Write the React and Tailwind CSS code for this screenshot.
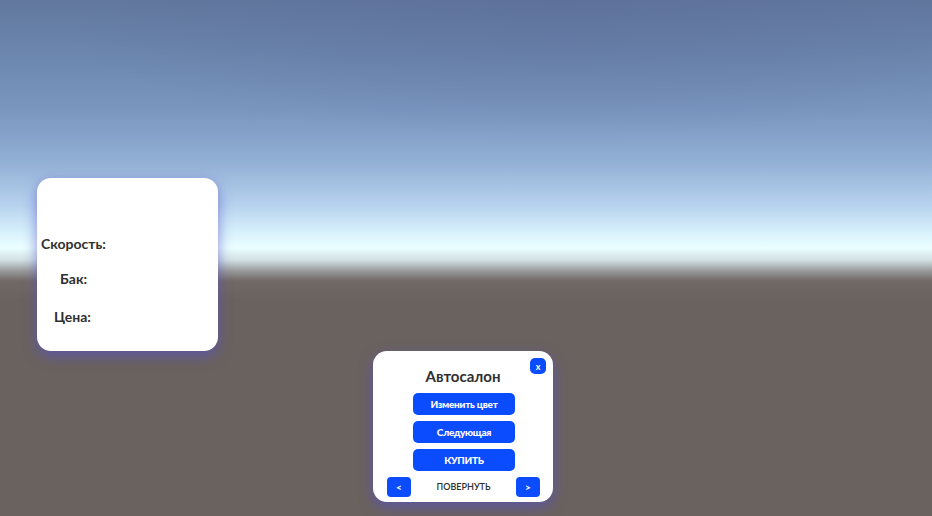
import React from 'react';

const font = { fontFamily: 'Lato, "Noto Sans", sans-serif' };

// ── Car stats card ─────────────────────────────────────────────────────────
const StatsPanel = () => (
    <div className="ml-[37px] mt-[178px] w-[181px] h-[173px] shrink-0 bg-white rounded-[14px] shadow-[0_5px_14px_rgba(88,80,200,0.65)] relative text-[#2f2f2f] font-bold text-[14px]">
        <div className="flex flex-col">
            <span className="mt-[57px] ml-[4px] leading-[18px]">Скорость:</span>
            <span className="mt-[17px] ml-[23px] leading-[18px]">Бак:</span>
            <span className="mt-[20px] ml-[17px] leading-[18px]">Цена:</span>
        </div>
    </div>
);

const BlueButton = ({ children }) => (
    <button className="w-[102px] h-[22px] rounded-[5px] bg-[#0b4cff] text-white text-[10px] font-black tracking-tight flex items-center justify-center">
        {children}
    </button>
);

const ArrowButton = ({ children }) => (
    <button className="w-[24px] h-[20px] rounded-[4px] bg-[#0b4cff] text-white text-[10px] font-black flex items-center justify-center">
        {children}
    </button>
);

// ── Showroom menu ──────────────────────────────────────────────────────────
const ShowroomPanel = () => (
    <div className="ml-[155px] mt-[351px] w-[180px] h-[151px] shrink-0 bg-white rounded-[14px] shadow-[0_5px_14px_rgba(88,80,200,0.65)] relative">
        <button className="absolute right-[7px] top-[7px] w-[16px] h-[16px] rounded-[5px] bg-[#0b4cff] text-white text-[9px] font-bold leading-none flex items-center justify-center">
            x
        </button>
        <div className="flex flex-col items-center">
            <h2 className="mt-[16px] text-[15px] font-bold text-[#2f2f2f] leading-[18px]">Автосалон</h2>
            <div className="mt-[8px] ml-[2px] flex flex-col gap-[6px]">
                <BlueButton>Изменить цвет</BlueButton>
                <BlueButton>Следующая</BlueButton>
                <BlueButton>КУПИТЬ</BlueButton>
            </div>
            <div className="mt-[6px] w-full pl-[14px] pr-[13px] flex items-center justify-between">
                <ArrowButton>&lt;</ArrowButton>
                <span className="text-[9px] text-[#2f2f2f] font-semibold">ПОВЕРНУТЬ</span>
                <ArrowButton>&gt;</ArrowButton>
            </div>
        </div>
    </div>
);

export default function App() {
    return (
        <div
            style={font}
            className="w-[932px] h-[516px] overflow-hidden flex items-start bg-[radial-gradient(ellipse_520px_140px_at_560px_0px,rgba(88,104,150,0.45),rgba(88,104,150,0)),linear-gradient(180deg,#62789e_0px,#6d88b0_60px,#7a96bf_110px,#91aed4_160px,#b6d2ee_205px,#d8f1fc_233px,#ebffff_248px,#d2e0e4_260px,#98999a_271px,#716966_281px,#6a625e_300px,#6a625e_516px)]"
        >
            <StatsPanel />
            <ShowroomPanel />
        </div>
    );
}
